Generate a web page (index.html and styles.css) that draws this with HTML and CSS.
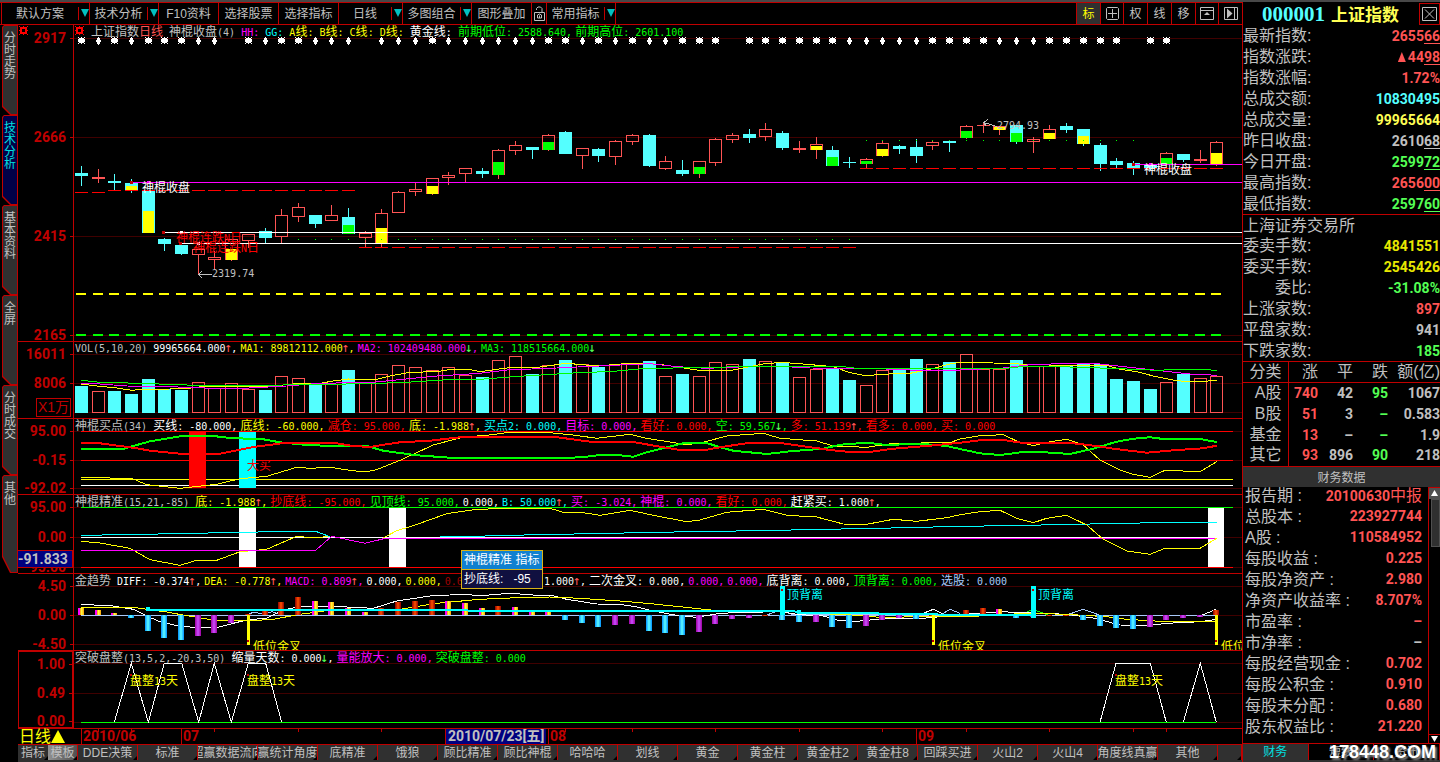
FILE: index.html
```html
<!DOCTYPE html>
<html lang="zh-CN">
<head>
<meta charset="utf-8">
<title>上证指数 000001</title>
<link rel="stylesheet" href="styles.css">
</head>
<body>
<div class="app">
  <main class="main">
    <nav class="toolbar">
      <div class="tools">
        <button class="tool drop"><span>默认方案</span><i></i></button>
        <button class="tool drop"><span>技术分析</span><i></i></button>
        <button class="tool">F10资料</button>
        <button class="tool">选择股票</button>
        <button class="tool">选择指标</button>
        <button class="tool drop"><span>日线</span><i></i></button>
        <button class="tool drop"><span>多图组合</span><i></i></button>
        <button class="tool">图形叠加</button>
        <button class="tool" aria-label="锁定"><svg width="11" height="15" viewBox="0 0 11 15"><path d="M2.500 4V2.500L4 1H6.500L8 2.500V6.500M.5 6.500H10.500V14.500H.5ZM3.500 12V9L5.500 8L7.500 9V12ZM5.500 9.500V12" fill="none" stroke="#c0c0c0"/></svg></button>
        <button class="tool drop"><span>常用指标</span><i></i></button>
      </div>
      <div class="modes">
        <button class="tool on">标</button>
        <button class="tool" aria-label="十字"><svg width="13" height="13" viewBox="0 0 13 13"><path d="M.5 1.500L1.500.5H11.500L12.500 1.500V11.500L11.500 12.500H1.500L.5 11.500ZM6.500 2V11M2 6.500H11" fill="none" stroke="#c0c0c0"/></svg></button>
        <button class="tool">权</button>
        <button class="tool">线</button>
        <button class="tool">移</button>
        <button class="tool" aria-label="上移"><svg width="14" height="13" viewBox="0 0 14 13"><path d="M.5.500H13.500V12.500H.5ZM.5 3.500H13.500" fill="none" stroke="#c0c0c0"/><path d="M7 5L10 8H4Z" fill="#c0c0c0"/></svg></button>
        <button class="tool" aria-label="末页"><svg width="14" height="13" viewBox="0 0 14 13"><path d="M.5.500H13.500V12.500H.5ZM10.500 1V12" fill="none" stroke="#c0c0c0"/><path d="M3 1.500L8.500 6.500L3 11.500Z" fill="#c0c0c0"/></svg></button>
      </div>
    </nav>
    <div class="work">
      <nav class="side">
        <button class="stab"><span>分时走势</span></button>
        <button class="stab on"><span>技术分析</span></button>
        <button class="stab"><span>基本资料</span></button>
        <button class="stab"><span>全屏</span></button>
        <button class="stab"><span>分时成交</span></button>
        <button class="stab"><span>其他</span></button>
      </nav>
      <div class="charts">
        <section class="panel" data-panel="price">
          <div class="axis"><svg class="gear" width="9" height="9" viewBox="0 0 9 9"><path d="M2 2H7V7H2Z" fill="none" stroke="#f00" stroke-width="2"/><path d="M0 0H1V1H0ZM8 0H9V1H8ZM0 8H1V9H0ZM8 8H9V9H8ZM4 0H5V1H4ZM4 8H5V9H4ZM0 4H1V5H0ZM8 4H9V5H8Z" fill="#f00"/></svg></div>
          <div class="plot"><p class="legend first"><svg class="gear" width="9" height="9" viewBox="0 0 9 9"><path d="M2 2H7V7H2Z" fill="none" stroke="#f00" stroke-width="2"/><path d="M0 0H1V1H0ZM8 0H9V1H8ZM0 8H1V9H0ZM8 8H9V9H8ZM4 0H5V1H4ZM4 8H5V9H4ZM0 4H1V5H0ZM8 4H9V5H8Z" fill="#f00"/></svg><span class="gy"><b>上证指数</b></span><span class="r1"><b>日线</b></span> <span class="gy"><b>神棍收盘</b>(4)</span> <span class="mg">HH:</span> <span class="cy">GG:</span> <span class="ye">A<b>线</b>:</span> <span class="ye">B<b>线</b>:</span> <span class="ye">C<b>线</b>:</span> <span class="ye">D<b>线</b>:</span> <span class="wh"><b>黄金线</b>:</span> <span class="gr val"><b>前期低位</b>: 2588.640,</span> <span class="gr"><b>前期高位</b>: 2601.100</span></p></div>
        </section>
        <section class="panel" data-panel="vol">
          <div class="axis"><span class="unit">X1<b>万</b></span></div>
          <div class="plot"><p class="legend"><span class="gy">VOL(5,10,20)</span> <span class="wh val">99965664.000<u>↑</u>,</span> <span class="ye val">MA1: 89812112.000<u>↑</u>,</span> <span class="mg val">MA2: 102409480.000<s>↓</s>,</span> <span class="gr">MA3: 118515664.000<s>↓</s></span></p></div>
        </section>
        <section class="panel" data-panel="buy">
          <div class="axis"></div>
          <div class="plot"><p class="legend"><span class="gy"><b>神棍买点</b>(34)</span> <span class="wh val"><b>买线</b>: -80.000,</span> <span class="ye val"><b>底线</b>: -60.000,</span> <span class="rd val"><b>减仓</b>: 95.000,</span> <span class="ye val"><b>底</b>: -1.988<u>↑</u>,</span> <span class="cy val"><b>买点</b>2: 0.000,</span> <span class="mg val"><b>目标</b>: 0.000,</span> <span class="rd val"><b>看好</b>: 0.000,</span> <span class="gr val"><b>空</b>: 59.567<s>↓</s>,</span> <span class="rd val"><b>多</b>: 51.139<u>↑</u>,</span> <span class="rd val"><b>看多</b>: 0.000,</span> <span class="rd"><b>买</b>: 0.000</span></p></div>
        </section>
        <section class="panel" data-panel="fine">
          <div class="axis"></div>
          <div class="plot"><p class="legend"><span class="gy"><b>神棍精准</b>(15,21,-85)</span> <span class="ye val"><b>底</b>: -1.988<u>↑</u>,</span> <span class="rd val"><b>抄底线</b>: -95.000,</span> <span class="gr val"><b>见顶线</b>: 95.000,</span> <span class="wh val">0.000,</span> <span class="cy val">B: 50.000<u>↑</u>,</span> <span class="mg val"><b>买</b>: -3.024,</span> <span class="mg val"><b>神棍</b>: 0.000,</span> <span class="rd val"><b>看好</b>: 0.000,</span> <span class="wh"><b>赶紧买</b>: 1.000<u>↑</u>,</span></p></div>
        </section>
        <section class="panel" data-panel="trend">
          <div class="axis"></div>
          <div class="plot"><p class="legend"><span class="gy"><b>金趋势</b></span> <span class="wh val">DIFF: -0.374<u>↑</u>,</span> <span class="ye val">DEA: -0.778<u>↑</u>,</span> <span class="mg val">MACD: 0.809<u>↑</u>,</span> <span class="wh val">0.000,</span> <span class="ye val">0.000,</span> <span class="dk val">0.000,</span> <span class="wh val"><b>一次金叉</b>: 1.000<u>↑</u>,</span> <span class="wh val"><b>二次金叉</b>: 0.000,</span> <span class="mg val">0.000,</span> <span class="mg val">0.000,</span> <span class="wh val"><b>底背离</b>: 0.000,</span> <span class="gr val"><b>顶背离</b>: 0.000,</span> <span class="bl"><b>选股</b>: 0.000</span></p></div>
        </section>
        <section class="panel sel" data-panel="box">
          <div class="axis"></div>
          <div class="plot"><p class="legend"><span class="gy"><b>突破盘整</b>(13,5,2,-20,3,50)</span> <span class="wh val"><b>缩量天数</b>: 0.000<s>↓</s>,</span> <span class="mg val"><b>量能放大</b>: 0.000,</span> <span class="gr"><b>突破盘整</b>: 0.000</span></p></div>
        </section>
        <div class="timeline">
          <button class="period">日线<i></i></button>
          <div class="dates" id="dates"></div>
        </div>
        <nav class="tabs">
          <button class="tab">指标</button><button class="tab lit">模板</button><button class="tab">DDE决策</button><button class="tab">标准</button><button class="tab">超赢数据流向</button><button class="tab">赢统计角度</button><button class="tab">底精准</button><button class="tab">饿狼</button><button class="tab">顾比精准</button><button class="tab">顾比神棍</button><button class="tab">哈哈哈</button><button class="tab">划线</button><button class="tab">黄金</button><button class="tab">黄金柱</button><button class="tab">黄金柱2</button><button class="tab">黄金柱8</button><button class="tab">回踩买进</button><button class="tab">火山2</button><button class="tab">火山4</button><button class="tab">角度线真赢</button><button class="tab">其他</button><span class="tab"></span>
        </nav>
        <output class="cursor">-91.833</output>
        <div class="tip" role="tooltip"><div>神棍精准 指标</div><div>抄底线:&nbsp;&nbsp; -95</div></div>
      </div>
    </div>
  </main>
  <aside class="quote">
    <header class="head"><span class="code">000001</span><h1>上证指数</h1><button class="close" aria-label="关闭"><svg width="15" height="14" viewBox="0 0 15 14"><path d="M.5.500H14.500V13.500H.5ZM3 2.500L12 11.500M12 2.500L3 11.500" fill="none" stroke="#c0c0c0"/></svg></button></header>
    <dl class="rows">
      <div><dt>最新指数:</dt><dd class="r1">2655<u>66</u></dd></div>
      <div><dt>指数涨跌:</dt><dd class="r1"><i class="up"></i>44<u>98</u></dd></div>
      <div><dt>指数涨幅:</dt><dd class="r1">1.72%</dd></div>
      <div><dt>总成交额:</dt><dd class="c1">10830495</dd></div>
      <div><dt>总成交量:</dt><dd class="y1">99965664</dd></div>
      <div><dt>昨日收盘:</dt><dd class="gy">2610<u>68</u></dd></div>
      <div><dt>今日开盘:</dt><dd class="g1">2599<u>72</u></dd></div>
      <div><dt>最高指数:</dt><dd class="r1">2656<u>00</u></dd></div>
      <div><dt>最低指数:</dt><dd class="g1">2597<u>60</u></dd></div>
    </dl>
    <dl class="rows">
      <div><dt>上海证券交易所</dt><dd></dd></div>
      <div><dt>委卖手数:</dt><dd class="y2">4841551</dd></div>
      <div><dt>委买手数:</dt><dd class="y2">2545426</dd></div>
      <div><dt class="short">委比:</dt><dd class="g1">-31.08%</dd></div>
      <div><dt>上涨家数:</dt><dd class="r1">897</dd></div>
      <div><dt>平盘家数:</dt><dd class="gy">941</dd></div>
      <div><dt>下跌家数:</dt><dd class="g1">185</dd></div>
    </dl>
    <table class="kinds">
      <thead><tr><th>分类</th><th>涨</th><th>平</th><th>跌</th><th>额(亿)</th></tr></thead>
      <tbody>
        <tr><th>A股</th><td class="r1">740</td><td>42</td><td class="g1">95</td><td>1067</td></tr>
        <tr><th>B股</th><td class="r1">51</td><td>3</td><td class="g1">–</td><td>0.583</td></tr>
        <tr><th>基金</th><td class="r1">13</td><td>–</td><td class="g1">–</td><td>1.9</td></tr>
        <tr><th>其它</th><td class="r1">93</td><td>896</td><td class="g1">90</td><td>218</td></tr>
      </tbody>
    </table>
    <h2>财务数据</h2>
    <div class="finance">
      <dl class="rows fin">
        <div><dt>报告期 :</dt><dd class="r1">20100630<b>中报</b></dd></div>
        <div><dt>总股本 :</dt><dd class="r1">223927744</dd></div>
        <div><dt>A股 :</dt><dd class="r1">110584952</dd></div>
        <div><dt>每股收益 :</dt><dd class="r1">0.225</dd></div>
        <div><dt>每股净资产 :</dt><dd class="r1">2.980</dd></div>
        <div><dt>净资产收益率 :</dt><dd class="r1">8.707%</dd></div>
        <div><dt>市盈率 :</dt><dd class="r1">–</dd></div>
        <div><dt>市净率 :</dt><dd class="gy">–</dd></div>
        <div><dt>每股经营现金 :</dt><dd class="r1">0.702</dd></div>
        <div><dt>每股公积金 :</dt><dd class="r1">0.910</dd></div>
        <div><dt>每股未分配 :</dt><dd class="r1">0.680</dd></div>
        <div><dt>股东权益比 :</dt><dd class="r1">21.220</dd></div>
      </dl>
      <div class="scroll"><button class="sup" aria-label="上"></button><span></span><button class="sdn" aria-label="下"></button></div>
    </div>
    <nav class="qtabs"><button class="on">财务</button><button>短线</button><button>资讯</button></nav>
    <div class="mark">178448.COM</div>
  </aside>
</div>
<script src="chart.js"></script>
</body>
</html>
```
FILE: styles.css
```css
* { box-sizing: border-box; }
body {
  margin: 0;
  background: #000;
  color: #c0c0c0;
  font: 12px/14px "Liberation Sans", "Noto Sans CJK SC", sans-serif;
}
button {
  margin: 0;
  padding: 0;
  border: 0;
  background: none;
  color: inherit;
  font: inherit;
  white-space: nowrap;
}
b { font-weight: normal; }
p, dl, dd, h1, h2 { margin: 0; }

.gy { color: #c0c0c0; }
.wh { color: #fff; }
.ye { color: #ff0; }
.mg { color: #f0f; }
.cy { color: #0ff; }
.gr { color: #0f0; }
.rd { color: #f00; }
.dk { color: #a00000; }
.bl { color: #a8c8f8; }
.r1 { color: #ff5454; }
.g1 { color: #54ff54; }
.c1 { color: #54ffff; }
.y1 { color: #ffff54; }
.y2 { color: #e8e800; }

.app {
  display: grid;
  grid-template-columns: minmax(0, 1fr) 198px;
  min-height: 100vh;
  border-top: 2px solid #484848;
}
.main { display: flex; flex-direction: column; min-width: 0; }

/* toolbar */
.toolbar {
  display: flex;
  justify-content: space-between;
  height: 23px;
  border-top: 1px solid #c00000;
  border-bottom: 1px solid #c00000;
}
.tools {
  display: grid;
  grid-template-columns: 88px 69px 60px 60px 60px 64px 69px 60px 15px 69px;
  margin-left: 1px;
  border-left: 1px solid #c00000;
}
.modes { display: grid; grid-template-columns: 24px 23px 24px 24px 24px 23px 23px; border-left: 1px solid #c00000; }
.tool {
  display: flex;
  align-items: center;
  justify-content: center;
  border-right: 1px solid #c00000;
}
.modes .tool:last-child { border-right: 0; }
.tool span { flex: 1; }
.tool.on { background: #303030; color: #ff0; }
.drop i {
  width: 11px;
  height: 13px;
  border-left: 1px solid #c00000;
}
.drop i::after {
  content: "";
  display: block;
  width: 8px;
  height: 8px;
  margin: 2px 0 0 2px;
  background: #00c0c0;
  clip-path: polygon(0 0, 100% 0, 50% 100%);
}

/* side tabs */
.work { display: grid; grid-template-columns: 18px minmax(0, 1fr); flex: 1; }
.side { display: flex; flex-direction: column; padding-left: 2px; }
.stab {
  position: relative;
  height: 90px;
  background: #c00000;
  clip-path: polygon(0 2px, 2px 0, 100% 0, 100% 100%, 8px 100%, 0 82px);
}
.stab::before {
  content: "";
  position: absolute;
  inset: 1px;
  background: #303030;
  clip-path: polygon(0 2px, 1px 0, 100% 0, 100% 100%, 8px 100%, 0 80px);
}
.stab.on { color: #00e0e0; }
.stab.on::before { background: #000048; }
.stab:last-child { height: 98px; }
.stab span {
  position: absolute;
  top: 7px;
  left: 2px;
  width: 12px;
  line-height: 12px;
  white-space: normal;
  word-break: break-all;
}

/* chart stack */
.charts {
  position: relative;
  display: grid;
  grid-template-rows: minmax(0, 317fr) minmax(0, 77fr) minmax(0, 76fr) minmax(0, 79fr) minmax(0, 77fr) minmax(0, 78fr) 16px 15px;
  border-bottom: 2px solid #303030;
  min-height: 620px;
}
.panel {
  display: grid;
  grid-template-columns: 56px minmax(0, 1fr);
  border-bottom: 1px solid #c00000;
}
.axis, .plot { position: relative; overflow: hidden; }
.axis { border-right: 1px solid #c00000; }
.sel .axis { border: 2px solid #c00000; border-width: 1px 2px 1px 1px; }
.chart { position: absolute; inset: 0; width: 100%; height: 100%; }
.legend {
  position: relative;
  z-index: 1;
  padding-left: 1px;
  white-space: nowrap;
  font: 10px/13px "DejaVu Sans Mono", monospace;
}
.legend.first { line-height: 14px; padding-left: 17px; }
.legend b, .note b { font: 12px/12px "Noto Sans CJK SC", sans-serif; }
.legend .val { margin-right: -3px; }
.legend u, .legend s {
  margin: 0 -1px;
  color: #ff5454;
  font-size: 13px;
  line-height: 10px;
  text-decoration: none;
}
.legend s { color: #54ff54; }
.gear { position: absolute; top: 1px; left: 1px; }
.tick {
  position: absolute;
  right: 7px;
  color: #c00000;
  font: bold 14px/14px Roboto, sans-serif;
  transform: translateY(-50%);
}
.tick::after {
  content: "";
  position: absolute;
  top: 7px;
  right: -8px;
  width: 4px;
  height: 1px;
  background: #c00000;
}
.unit {
  position: absolute;
  right: 2px;
  bottom: 1px;
  padding: 0 1px;
  border: 1px solid #c00000;
  color: #c00000;
  font: 14px/17px "Liberation Sans", "Noto Sans CJK SC", sans-serif;
}
.note {
  position: absolute;
  z-index: 1;
  white-space: nowrap;
  font: 10px/14px "DejaVu Sans Mono", monospace;
  transform: translateY(-50%);
}
.cursor {
  position: absolute;
  top: 71.4%;
  left: 0;
  width: 55px;
  padding-right: 5px;
  border: 1px solid #c00000;
  border-left: 0;
  background: #000080;
  text-align: right;
  font: bold 14px/16px Roboto, sans-serif;
}
.tip {
  position: absolute;
  z-index: 2;
  top: 71.4%;
  left: 36.2%;
  border: 1px solid #d8b418;
  background: #101040;
  color: #fff;
  line-height: 18px;
}
.tip div { padding: 0 3px 0 2px; white-space: nowrap; }
.tip div:first-child { background: #1080d0; border-bottom: 1px solid #d8b418; }

/* time axis */
.timeline {
  display: grid;
  grid-template-columns: 56px minmax(0, 1fr);
  border-bottom: 1px solid #c00000;
}
.period { display: flex; align-items: center; color: #ff0; font-size: 16px; line-height: 15px; padding-left: 1px; }
.period i { width: 14px; height: 13px; background: #ff0; clip-path: polygon(50% 0, 100% 100%, 0 100%); }
.dates { position: relative; overflow: hidden; color: #c00000; font: bold 14px/15px Roboto, "Noto Sans CJK SC", sans-serif; }
.dates span { position: absolute; top: 0; padding-left: 1px; border-left: 1px solid #c00000; white-space: nowrap; height: 15px; }
.dates .now { background: #000080; color: #c0c0c0; padding: 0 2px; }
.dates i { position: absolute; top: 0; width: 1px; height: 3px; background: #c00000; }

/* template tabs */
.tabs { display: grid; grid-template-columns: 30fr 30fr repeat(19, 60fr) 24fr; background: #303030; }
.tab {
  position: relative;
  display: flex;
  align-items: center;
  justify-content: center;
  min-width: 0;
  overflow: hidden;
  border-right: 1px solid #c00000;
}
.tab:first-child { border-right: 0; }
.tab.lit { background: linear-gradient(to right, #909090, #505050); }
.tab::after {
  content: "";
  position: absolute;
  right: 0;
  bottom: 0;
  width: 4px;
  height: 4px;
  background: #000;
  clip-path: polygon(100% 0, 100% 100%, 0 100%);
}

/* quote column */
.quote {
  position: relative;
  display: flex;
  flex-direction: column;
  border-left: 1px solid #c00000;
}
.head { display: flex; align-items: center; height: 23px; padding-left: 19px; gap: 6px; }
.code { color: #54ffff; font: bold 21px/22px "Liberation Serif", serif; }
.head h1 { flex: 1; color: #ffff54; font: bold 17px/22px "Noto Sans CJK SC", sans-serif; }
.close {
  display: flex;
  align-items: center;
  justify-content: center;
  width: 21px;
  height: 22px;
  border: 1px solid #c00000;
}
.rows { font-size: 16px; border-bottom: 1px solid #c00000; }
.rows div { display: flex; justify-content: space-between; height: 21px; line-height: 22px; white-space: nowrap; }
.rows + .rows div:first-child { height: 20px; }
.rows dt.short { padding-left: 32px; }
.rows dd, .kinds td { font: bold 14px/22px Roboto, "Noto Sans CJK SC", sans-serif; }
.rows dd b { font-weight: normal; font-size: 16px; }
.rows u { display: inline-block; height: 19px; text-decoration: none; border-bottom: 1px solid; }
.up { display: inline-block; width: 8px; height: 10px; margin-right: 2px; background: #ff5454; clip-path: polygon(50% 0, 100% 100%, 0 100%); }
.kinds { width: 100%; border-collapse: collapse; table-layout: fixed; border-bottom: 1px solid #c00000; }
.kinds th, .kinds td { padding: 0; height: 21px; text-align: right; white-space: nowrap; line-height: 20px; }
.kinds th { font: 16px/20px "Liberation Sans", "Noto Sans CJK SC", sans-serif; }
.kinds th:first-child { width: 45px; padding-right: 6px; border-right: 1px solid #c00000; }
.kinds th:nth-child(2) { width: 30px; }
.kinds th:nth-child(3), .kinds th:nth-child(4) { width: 35px; }
.kinds thead th { height: 20px; line-height: 19px; border-bottom: 1px solid #c00000; }
.kinds thead th:first-child { border-right: 1px solid #c00000; }
.quote h2 { height: 20px; background: #303030; text-align: center; font: 12px/19px "Noto Sans CJK SC", sans-serif; }
.finance { display: flex; flex: 1; border-bottom: 1px solid #c00000; }
.fin { flex: 1; border: 0; padding: 0 6px 0 2px; }
.fin div, .fin dd { line-height: 17px; }
.scroll { display: flex; flex-direction: column; width: 12px; border: 1px solid #c00000; border-width: 1px 0 0 1px; }
.scroll span { flex: 0 0 48px; margin-left: 2px; border: 1px solid #505050; background: #303030; }
.sup, .sdn { height: 11px; background: #505050; }
.sup::after, .sdn::after { content: ""; display: block; width: 7px; height: 6px; margin: 0 auto; background: #fff; clip-path: polygon(50% 0, 100% 100%, 0 100%); }
.sdn { margin-top: auto; height: 9px; background: none; border-top: 1px solid #c00000; }
.sdn::after { clip-path: polygon(0 0, 100% 0, 50% 100%); }
.qtabs { display: grid; grid-template-columns: repeat(3, 1fr); height: 18px; border-bottom: 2px solid #303030; }
.qtabs button { border-right: 1px solid #c00000; }
.qtabs .on { background: #303030; color: #00e0e0; }
.mark {
  position: absolute;
  right: 4px;
  bottom: 0;
  color: #fff;
  font: bold 18px/20px "Liberation Sans", sans-serif;
  text-shadow: 2px 2px 2px #888;
}
```
FILE: chart.js
```js
const X0 = 74, W = 1168, STEP = 16.7;
const cx = i => Math.floor(81.3 + STEP * i);
const RED = '#ff5454', CYAN = '#54ffff';

const rect = (x, y, w, h, fill) => `<rect x="${x}" y="${y}" width="${w}" height="${h}" fill="${fill}"/>`;
const box = (x, y, w, h, c) => `<rect x="${x + .5}" y="${y + .5}" width="${w - 1}" height="${Math.max(h - 1, 1)}" fill="none" stroke="${c}"/>`;
const hline = (y, c, x1 = 81, x2 = 1233, h = 1) => rect(x1, y, x2 - x1, h, c);
const grid = ys => ys.map(y => hline(y, '#400000', X0, 1242)).join('');

// Series are stored as [originX, originY, "x,y x,y ..."] at three units per pixel.
const line = (c, w, parts) => {
  const pts = parts.flatMap(([ox, oy, s]) => s.split(' ').map(p => {
    const [x, y] = p.split(',').map(Number);
    return (x / 3 + ox).toFixed(1) + ',' + (y / 3 + oy).toFixed(1);
  }));
  return `<polyline points="${pts.join(' ')}" fill="none" stroke="${c}" stroke-width="${w}"/>`;
};

// kind, body top, body bottom, wick high, wick low, [fill colour, fill top]
const candles = `c173,176,166,186 r177,179,169,183 c181,183,174,190 c183,191,179,193,y186 c190,233,190,233,y211
c239,244,238,251 c245,254,243,255 r249,255,249,274 r257,260,251,269 r239,260,239,261,y249 r234,241,234,248
c231,238,228,243 r215,237,209,243 r207,217,203,222 c215,224,215,228 r215,221,205,221 c217,234,208,234,g225
r233,238,231,247 r213,243,209,247,y228 r192,213,191,213 r189,192,182,196 r178,194,178,195,y186 r175,178,172,185
r168,174,168,182 c171,174,168,178 r150,175,149,179,g162 r145,151,141,155 c147,150,147,159 r135,150,134,151,g142
c132,154,131,154 r148,156,148,169 c149,156,148,162 r141,157,140,165 r135,142,134,145 c135,166,134,167
r161,169,156,170 c170,174,160,176 r161,174,161,178,g167 r139,163,138,166 r135,140,133,143 c134,138,129,143
r129,137,123,141 c133,148,131,150 r148,150,141,153 r144,150,137,159,y146 c150,166,146,166,g157 c162,163,157,168
r159,164,158,168,g161 r143,156,141,157,y149 c146,149,145,154 c147,156,139,163 r142,146,140,150 c141,143,140,152
r126,138,125,139,g131 r125,126,122,133 r126,130,126,135,y127 c125,142,125,144,g133 r139,142,137,153
r129,139,125,139,y133 c126,130,123,133 c129,144,129,146,y136 c145,164,143,171 c161,165,158,168 c163,168,161,175
c165,168,165,170 r153,164,152,164,g158 c154,160,154,162 r159,161,150,163 r142,165,141,166,y153`
  .split(/\s+/).map(s => ({ up: s[0] === 'r', v: s.slice(1).split(',') }));
const MARKS = 'sdsdsssdd.sdssddd.dddsdddddd' + 'ssdsdsddsss.ssssssdddddss' + 'ssdddsssss.ss';
const volumes = [386, 391, 391, 394, 379, 389, 390, 382, 388, 383, 389, 390, 376, 378, 384, 384, 370, 383, 374, 365, 367, 370, 367, 375, 377,
  360, 356, 374, 365, 360, 364, 367, 364, 364, 361, 376, 374, 376, 362, 364, 359, 361, 363, 377, 369, 368, 380, 385, 370, 369, 359, 364, 362,
  354, 369, 369, 360, 366, 366, 366, 364, 364, 379, 381, 389, 382, 374, 378, 376];
const volumeUp = '10000001010011010011111101101011011010110101011011101001010111000011001';
const hist = `Y608 Y610 Y613 B618 B631 B638 B640 M636 M633 M623 R614 R611 R602 R597 Y601 Y602 Y608 Y612 R608 R602 R601 R600 Y601
Y603 Y608 R606 Y607 Y612 Y612 B620 B623 B627 M625 M624 B631 B633 B635 M632 M624 M619 M618 R615 B620 B622 M622 B627 B628
M626 M620 M618 B619 R615 R615 R610 R608 Y609 B618 M617 R615 R615 B620 B626 B628 B629 M627 M620 M618 M617 R610`.split(/\s+/);

function price() {
  let s = grid([38, 137, 236, 335]);
  const fill = { y: '#ffff00', g: '#00ff00' };
  candles.forEach(({ up, v }, i) => {
    const x = cx(i), c = up ? RED : CYAN, [t, b, hi, lo] = v.map(Number);
    if (up) {
      if (hi < t) s += rect(x, hi, 1, t - hi, c);
      if (lo > b) s += rect(x, b, 1, lo - b, c);
      s += b - t < 3 ? rect(x - 6, t, 13, b - t, c) : box(x - 6, t, 13, b - t, c);
      if (b - t < 3) s += rect(x, hi, 1, lo - hi, c);
    } else s += rect(x, hi, 1, lo - hi, c) + rect(x - 6, t, 13, b - t, c);
    if (v[4]) { const ft = +v[4].slice(1); s += rect(x - 5, ft, 11, b - ft, fill[v[4][0]]); }
    const dash = i < 2 ? 192 : i < 17 ? 190 : i < 47 ? 247 : 168;
    s += rect(x - 6, dash, 13, 1, '#f00');
    if (i > 12 && i < 64) s += rect(x, i < 47 ? 239 : 140, 1, 1, '#0f0');
    s += rect(x - 5, 293, 10, 2, '#ff0') + rect(x - 5, 334, 10, 2, '#0f0');
    const m = MARKS[i];
    if (m === 's') s += rect(x - 2, 38, 5, 5, '#fff') + rect(x - 3, 39, 7, 3, '#fff')
      + [[-3, 37], [0, 37], [3, 37], [-3, 43], [0, 43], [3, 43]].map(([dx, y]) => rect(x + dx, y, 1, 1, '#fff')).join('');
    if (m === 'd') s += rect(x, 37, 1, 8, '#fff') + rect(x - 1, 38, 3, 6, '#fff') + rect(x - 2, 40, 5, 2, '#fff');
  });
  s += hline(182, '#f0f', 131, 1242) + hline(164, '#f0f', 1133, 1242);
  s += hline(232, '#fff', 164, 1242) + hline(243, '#fff', 181, 1242);
  [[131, 181], [1133, 163], [163, 231], [180, 242]].forEach(([x, y]) => s += rect(x - 1, y, 3, 3, '#c00000'));
  [[148, 181], [1150, 163]].forEach(([x, y]) => s += rect(x - 1, y, 3, 3, '#f0f'));
  [[181, 231], [198, 242]].forEach(([x, y]) => s += rect(x - 1, y, 3, 3, '#fff'));
  s += '<path d="M212 274.500H198.500M202 271L198.500 274.500L202 278M997 126.500L983.500 122.500M988 119.500L983.500 122.500L986 126" fill="none" stroke="#c0c0c0"/>';
  return s;
}

function vol() {
  let s = grid([354, 383, 412]);
  volumes.forEach((t, i) => {
    const x = cx(i) - 6;
    s += candles[i].up ? box(x, t, 13, 413 - t, RED) : rect(x, t, 13, 413 - t, CYAN);
  });
  s += line('#ff0', 1, [[0, 180, '243,612 290,618 350,624 395,631 430,628 510,627 565,625 620,618 820,618 880,612 960,610 1000,603 1045,597 1090,600 1130,598 1170,588 1230,577 1310,575 1355,568 1415,570'],
    [480, 330, '0,125 50,118 100,112 160,114 200,108 260,100 350,108 450,100 500,100 560,106 650,120 760,120 850,102 905,97 980,103 1060,110 1110,128 1160,138 1200,133 1290,130 1350,118 1410,102'],
    [960, 330, '0,97 100,99 230,104 350,107 440,106 480,118 530,125 580,138 650,152 710,156 770,151']]);
  s += line('#f0f', 1, [[0, 180, '243,610 300,612 380,618 510,620 640,625 730,625 860,618 960,610 1120,607 1210,598 1310,588'],
    [480, 330, '0,130 80,120 230,114 400,106 510,101 590,110 680,115 800,110 900,109 990,114 1170,115 1290,120 1440,120'],
    [960, 330, '130,114 210,104 300,101 420,102 500,111 590,121 690,132 770,136']]);
  s += line('#0f0', 1, [[0, 180, '243,601 300,607 420,610 560,615 680,618 850,615 1000,613 1200,608 1330,600'],
    [480, 330, '0,148 100,140 280,129 400,124 500,115 660,113 820,109 1080,109 1130,115 1440,115'],
    [960, 330, '140,115 200,108 330,111 480,116 590,121 690,117 770,121']]);
  return s;
}

function buy() {
  return grid([431, 460, 488]) + hline(431, '#f00') + hline(460, '#f00') + hline(479, '#ff0') + hline(485, '#fff')
    + rect(189, 432, 17, 56, '#f00') + rect(239, 432, 17, 56, '#0ff')
    + line('#ff0', 1, [[0, 400, '243,232 320,233 350,236 400,237 440,254 540,265 650,253 720,236 800,229 890,202 930,205 990,202 1050,211 1095,216 1130,209 1200,181 1300,135 1390,111'],
      [480, 330, '20,316 80,308 210,308 280,315 350,325 450,313 500,325 620,344 670,337 740,318 850,310 900,325 1010,333 1060,348 1160,352 1240,340 1410,338'],
      [960, 330, '0,327 60,317 130,314 170,333 220,347 260,337 320,328 370,345 420,390 480,420 520,433 570,442 615,421 720,425 770,395']])
    + line('#0f0', 2, [[0, 400, '243,147 370,147 400,138 450,124 540,109 640,108 690,114 790,118 840,127 920,135 1000,138 1100,138 1150,152 1250,166 1350,173'],
      [480, 330, '0,385 250,385 320,380 360,375 410,375 460,380 500,367 560,352 610,340 680,339 720,352 760,362 860,372 930,364 1030,356 1080,344 1160,338 1220,345 1320,341 1400,348'],
      [960, 330, '0,357 60,370 120,375 190,366 240,366 330,372 400,356 470,335 520,326 570,322 610,327 720,327 770,336']])
    + line('#f00', 2, [[0, 400, '243,128 300,130 360,138 410,145 450,152 540,161 650,163 690,155 760,141 860,128 1000,128 1060,138 1110,141 1150,134 1200,127 1290,122 1380,112'],
      [480, 330, '0,320 220,320 330,335 460,336 540,350 600,360 680,359 730,350 800,340 900,339 980,350 1050,360 1110,366 1170,366 1230,357 1340,348'],
      [960, 330, '0,338 60,331 130,330 190,339 340,340 410,348 460,356 560,368 640,361 730,355 770,347']]);
}

function fine() {
  return grid([507, 537, 567]) + rect(239, 507, 17, 60, '#fff') + rect(389, 507, 17, 60, '#fff') + rect(1208, 507, 16, 60, '#fff')
    + hline(507, '#0f0') + hline(537, '#fff', 81, 1216) + hline(567, '#f00') + hline(538, '#f0f', 385, 1216)
    + line('#ff0', 1, [[0, 400, '243,424 300,429 390,445 450,479 540,496 590,481 650,481 720,455 800,448 890,409 940,414 990,409']])
    + line('#f0f', 1, [[0, 400, '243,451 947,451 995,409 1095,430 1160,414']])
    + line('#0ff', 1, [[0, 400, '243,406 370,404 520,401 670,398 820,395 947,394 990,410']])
    + line('#0ff', 1, [[0, 400, '1320,410 1440,409'], [480, 330, '30,617 180,614 330,611 480,608 630,605 830,602 980,599 1130,596 1280,593'], [960, 330, '0,589 145,587 345,583 495,580 645,577 770,577']])
    + line('#ff0', 1, [[0, 400, '1150,414 1190,392 1240,377 1340,341 1430,328'],
      [480, 330, '0,538 80,535 130,537 210,535 250,547 310,548 360,556 450,541 520,556 620,575 660,570 740,547 850,538 920,556 1010,561 1090,582 1160,583 1240,568 1310,574 1400,563'],
      [960, 330, '0,554 60,545 120,541 170,565 220,578 260,565 320,556 380,585 430,628 500,663 570,673 615,655 720,655 770,625']]);
}

function trend() {
  const g = (id, ...st) => `<linearGradient id="${id}">${st.map(([o, c]) => `<stop offset="${o}" stop-color="${c}"/>`).join('')}</linearGradient>`;
  let s = '<defs>' + g('Y', [0, '#f0f'], [.25, '#f0f'], [.3, '#ff8000'], [.6, '#ffff40'], [1, '#ffa000'])
    + g('B', [0, '#0090ff'], [.5, '#60ffff'], [1, '#0090ff']) + g('M', [0, '#a000a0'], [.5, '#c850ff'], [1, '#a000a0'])
    + g('R', [0, '#900000'], [.5, '#ff5000'], [1, '#900000']) + '</defs>';
  s += grid([586, 615, 644]) + hline(615, '#a8c8f8', 81, 1216);
  s += line('#a8c8f8', 1, [[0, 570, '745,134 760,126 790,133 815,125 845,134']])
    + line('#a8c8f8', 1, [[480, 570, '860,135 900,121 940,134 1385,133 1410,118 1440,130']])
    + line('#a8c8f8', 1, [[960, 570, '320,135 370,118 418,135']]) + line('#0f0', 1, [[960, 570, '180,135 218,118 265,135']])
    + line('#fff', 1, [[480, 570, '1330,130 1360,118 1385,130']]) + line('#fff', 1, [[960, 570, '720,138 769,118']]);
  s += line('#fff', 1, [[0, 570, '243,103 340,108 400,118 440,138 480,155 530,167 590,173 650,173 700,160 740,150 800,144 850,120 900,110 960,109 1040,111 1120,115 1190,93 1290,78 1390,73'],
    [480, 570, '0,77 90,70 160,75 210,75 260,88 350,102 420,103 470,111 520,123 600,138 650,142 720,130 800,127 900,125 960,134 1030,138 1070,150 1120,155 1200,147 1330,145'],
    [960, 570, '0,134 120,125 320,133 400,144 480,165 560,167 620,160 720,155 770,148']])
    + line('#ff0', 1, [[0, 570, '243,114 400,112 440,118 500,126 560,137 640,150 750,152 820,148 900,133 980,122 1100,120 1200,118 1310,100'],
      [480, 570, '0,88 90,84 210,81 300,85 420,93 500,100 600,110 700,121 930,124 1000,130 1100,134 1200,142'],
      [960, 570, '0,139 60,138 200,130 320,133 440,140 500,148 600,154 770,155']]);
  hist.forEach((h, i) => {
    const y = +h.slice(1), x = cx(i) - 3;
    s += rect(x, Math.min(y, 615), 6, Math.max(Math.abs(y - 615), 1), `url(#${h[0]})`);
  });
  s += line('#0ff', 2, [[0, 570, '444,120 1390,120 1420,123'], [480, 570, '0,123 940,123 960,129 1190,129 1200,132'], [960, 570, '0,134 225,134']]);
  s += rect(146, 607, 4, 4, '#0ff') + rect(797, 610, 4, 4, '#0ff')
    + rect(780, 586, 5, 29, '#0ff') + rect(1031, 586, 5, 32, '#0ff') + rect(781, 589, 2, 2, '#c00000') + rect(1032, 589, 2, 2, '#c00000');
  [247, 932, 1215].forEach(x => s += rect(x, 615, 3, 30, '#ff0') + rect(x, 640, 2, 2, '#c00000'));
  return s;
}

function breakout() {
  const o = [0, 570], r = [960, 570];
  let s = grid([663, 693, 722]) + hline(722, '#0f0', 81, 1216);
  [[...o, '343,457 394,280 445,457 493,280 545,280 596,457 643,280 694,457 745,280 797,280 845,457'],
    [...r, '420,457 468,280 571,280 619,457'], [...r, '670,457 721,280 769,457']].forEach(p => s += line('#fff', 1, [p]));
  [130, 247, 1115].forEach(x => s += rect(x, 674, 2, 2, '#c00000'));
  return s;
}

const panels = {
  price: { y: 25, h: 316, draw: price, ticks: [['2917', 38], ['2666', 137], ['2415', 236], ['2165', 335]],
    notes: [[142, 188, '神棍收盘', 'wh'], [1144, 170, '神棍收盘', 'wh'], [176, 238, '神棍连跌N日', 'rd'], [193, 248, '神棍连跌N日', 'rd'], [212, 274, '2319.74', 'gy'], [997, 126, '2794.93', 'gy']] },
  vol: { y: 342, h: 76, draw: vol, ticks: [['16011', 354], ['8006', 383]], notes: [] },
  buy: { y: 419, h: 75, draw: buy, ticks: [['95.00', 431], ['-0.15', 460], ['-92.02', 488]], notes: [[247, 466, '大买', 'rd']] },
  fine: { y: 495, h: 78, draw: fine, ticks: [['95.00', 507], ['0.00', 537], ['-95.00', 567]], notes: [] },
  trend: { y: 574, h: 76, draw: trend, ticks: [['4.50', 586], ['0.00', 615], ['-4.50', 644]],
    notes: [[253, 647, '低位金叉', 'ye'], [938, 647, '低位金叉', 'ye'], [1221, 647, '低位金叉', 'ye'], [787, 595, '顶背离', 'cy'], [1038, 595, '顶背离', 'cy']] },
  box: { y: 651, h: 77, draw: breakout, ticks: [['1.00', 663], ['0.49', 693], ['0.00', 722]],
    notes: [[130, 681, '盘整13天', 'ye'], [247, 681, '盘整13天', 'ye'], [1115, 681, '盘整13天', 'ye']] }
};

for (const [name, p] of Object.entries(panels)) {
  const el = document.querySelector(`[data-panel="${name}"]`);
  const pct = y => ((y - p.y) / p.h * 100).toFixed(2) + '%';
  el.querySelector('.axis').insertAdjacentHTML('beforeend', p.ticks.map(([t, y]) => `<span class="tick" style="top:${pct(y)}">${t}</span>`).join(''));
  el.querySelector('.plot').insertAdjacentHTML('beforeend',
    `<svg class="chart" viewBox="${X0} ${p.y} ${W} ${p.h}" preserveAspectRatio="none" shape-rendering="crispEdges">${p.draw()}</svg>`
    + p.notes.map(([x, y, t, c]) => `<span class="note ${c}" style="left:${((x - X0) / W * 100).toFixed(2)}%;top:${pct(y)}">${t.replace(/[\u4e00-\u9fff]+/g, '<b>$&</b>')}</span>`).join(''));
}

const left = x => `style="left:${((x - X0) / W * 100).toFixed(2)}%"`;
document.getElementById('dates').innerHTML =
  [98, 131, 214, 298, 381, 565, 632, 715, 799, 882, 966, 1049, 1133, 1166].map(x => `<i ${left(x)}></i>`).join('')
  + [[81, '2010/06'], [181, '07'], [548, '08'], [916, '09']].map(([x, t]) => `<span ${left(x)}>${t}</span>`).join('')
  + `<span class="now" ${left(445)}>2010/07/23[五]</span>`;
```
